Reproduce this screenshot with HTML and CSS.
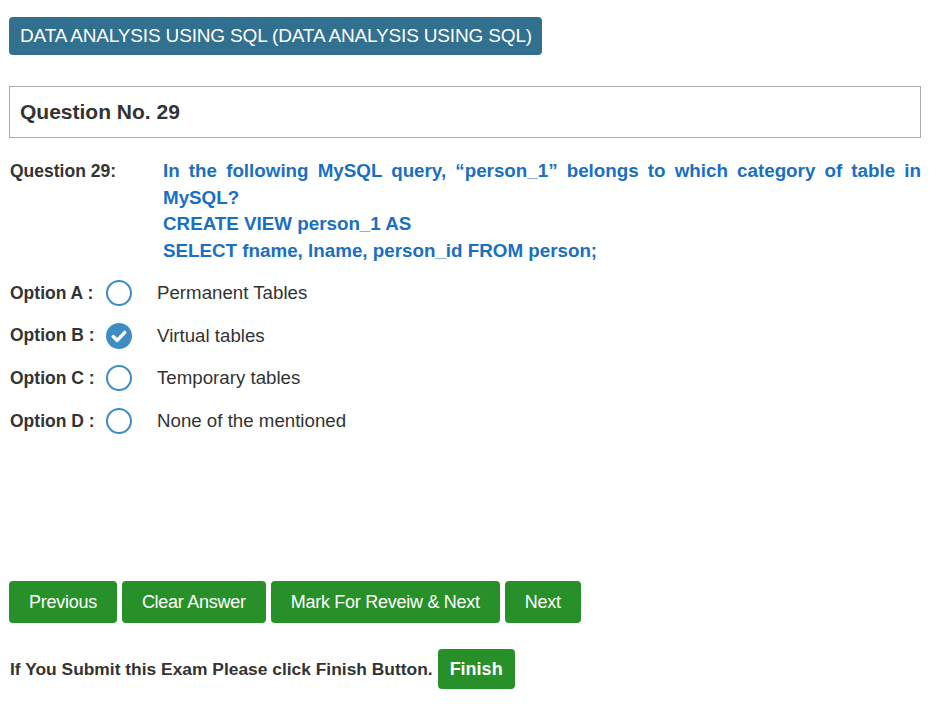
FILE: index.html
```html
<!DOCTYPE html>
<html lang="en">
<head>
<meta charset="utf-8">
<title>Exam</title>
<link rel="stylesheet" href="styles.css">
</head>
<body>
<div class="page">
  <div class="badge">DATA ANALYSIS USING SQL (DATA ANALYSIS USING SQL)</div>
  <div class="qbox">Question No. 29</div>
  <div class="qrow">
    <div class="qlabel">Question 29:</div>
    <div class="qtext">
      <p class="just">In the following MySQL query, “person_1” belongs to which category of table in MySQL?</p>
      <p>CREATE VIEW person_1 AS</p>
      <p>SELECT fname, lname, person_id FROM person;</p>
    </div>
  </div>
  <div class="options">
    <div class="opt"><span class="olabel">Option A :</span><span class="radio"></span><span class="otext">Permanent Tables</span></div>
    <div class="opt"><span class="olabel">Option B :</span><span class="radio checked"><svg viewBox="0 0 26 26" width="26" height="26"><path d="M7.2 13.6 L11.2 17.4 L18.8 9.4" fill="none" stroke="#fff" stroke-width="3.4" stroke-linecap="round" stroke-linejoin="round"/></svg></span><span class="otext">Virtual tables</span></div>
    <div class="opt"><span class="olabel">Option C :</span><span class="radio"></span><span class="otext">Temporary tables</span></div>
    <div class="opt"><span class="olabel">Option D :</span><span class="radio"></span><span class="otext">None of the mentioned</span></div>
  </div>
  <div class="actions">
    <button class="btn">Previous</button>
    <button class="btn">Clear Answer</button>
    <button class="btn">Mark For Reveiw &amp; Next</button>
    <button class="btn">Next</button>
  </div>
  <div class="finish-row">
    <span class="finish-text">If You Submit this Exam Please click Finish Button.</span>
    <button class="btn btn-finish">Finish</button>
  </div>
</div>
</body>
</html>
```

FILE: styles.css
```css
* { box-sizing: border-box; }
html, body { margin: 0; padding: 0; background: #fff; }
body {
  font-family: "Liberation Sans", Arial, sans-serif;
  color: #333;
}
.page {
  padding: 17px 21px 0 9px;
}
.badge {
  display: inline-block;
  height: 38px;
  line-height: 38px;
  padding: 0 10px 0 11px;
  background: #31708f;
  color: #fff;
  font-size: 19px;
  letter-spacing: -0.16px;
  border-radius: 4px;
}
.qbox {
  margin-top: 31px;
  height: 52px;
  border: 1px solid #aaa;
  padding: 0 10px;
  font-size: 21px;
  font-weight: bold;
  line-height: 50px;
  color: #333;
}
.qrow {
  display: grid;
  grid-template-columns: 154px 1fr;
  margin-top: 20px;
}
.qlabel {
  padding-left: 1px;
  font-size: 17.5px;
  font-weight: bold;
  line-height: 27px;
  color: #333;
}
.qtext {
  font-size: 18.8px;
  font-weight: bold;
  line-height: 26.7px;
  color: #1a6fc1;
}
.qtext p { margin: 0; }
.qtext .just { text-align: justify; }
.options {
  margin-top: 7px;
}
.opt {
  display: flex;
  align-items: center;
  height: 42.67px;
}
.olabel {
  width: 97px;
  padding-left: 1px;
  font-size: 17.5px;
  font-weight: bold;
  color: #333;
}
.radio {
  flex: none;
  width: 26px;
  height: 26px;
  border: 2px solid #3d8dc4;
  border-radius: 50%;
  display: flex;
  align-items: center;
  justify-content: center;
}
.radio.checked {
  background: #3d8dc4;
  border: none;
}
.otext {
  margin-left: 25px;
  font-size: 18.7px;
  color: #333;
}
.actions {
  margin-top: 139px;
  display: flex;
  gap: 5px;
}
.btn {
  font-family: "Liberation Sans", Arial, sans-serif;
  height: 42px;
  padding: 0 20px;
  background: #289028;
  color: #fff;
  border: none;
  border-radius: 4px;
  font-size: 18px;
  letter-spacing: -0.27px;
}
.finish-row {
  margin-top: 26px;
  display: flex;
  align-items: center;
  gap: 5px;
}
.finish-text {
  padding-left: 1px;
  font-size: 17.4px;
  font-weight: bold;
  color: #333;
}
.btn-finish {
  height: 40px;
  padding: 0 12px;
  font-weight: bold;
  letter-spacing: 0;
}
```
